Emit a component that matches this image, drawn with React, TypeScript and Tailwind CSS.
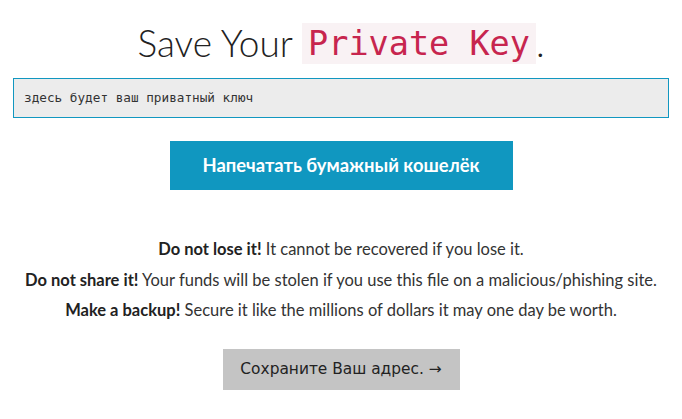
export default function App() {
  return (
    <div className="w-[682px] h-[419px] bg-white flex flex-col items-center font-['Lato','Noto_Sans',sans-serif] text-[#333]">
      <h1 className="mt-[19px] h-[48px] flex items-center text-[37px] font-light text-[#222]">
        <span>Save Your&nbsp;</span>
        <code className="px-[6px] bg-[#f9f2f4] text-[#c7254e] font-['DejaVu_Sans_Mono',monospace] text-[33.5px] leading-[41px]">
          Private Key
        </code>
        <span>.</span>
      </h1>

      <div className="mt-[11px] w-[656px] h-[40px] border border-[#1197c0] bg-[#ececec] flex items-center pl-[10px]">
        <span className="font-['DejaVu_Sans_Mono',monospace] text-[12.7px] text-[#333]">
          здесь будет ваш приватный ключ
        </span>
      </div>

      <button className="mt-[23px] w-[343px] h-[49px] bg-[#1097c0] text-white text-[18.4px] font-bold">
        Напечатать бумажный кошелёк
      </button>

      {/* warnings */}
      <div className="mt-[49px] flex flex-col items-center gap-[10.5px] text-[16.5px] leading-[20px]">
        <p>
          <b className="font-bold text-[#222]">Do not lose it!</b> It cannot be recovered if you lose it.
        </p>
        <p>
          <b className="font-bold text-[#222]">Do not share it!</b> Your funds will be stolen if you use this file on a malicious/phishing site.
        </p>
        <p>
          <b className="font-bold text-[#222]">Make a backup!</b> Secure it like the millions of dollars it may one day be worth.
        </p>
      </div>

      <button className="mt-[29px] w-[237px] h-[41px] bg-[#c4c4c4] text-[#222] text-[15.4px] font-['DejaVu_Sans',sans-serif]">
        Сохраните Ваш адрес. →
      </button>
    </div>
  );
}
